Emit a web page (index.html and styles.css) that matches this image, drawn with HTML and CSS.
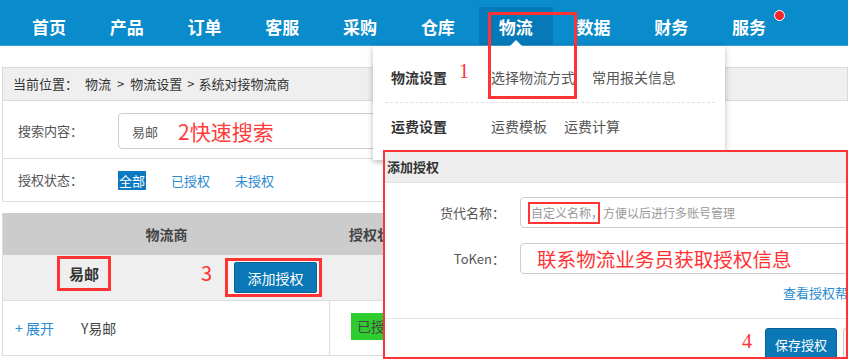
FILE: index.html
```html
<!DOCTYPE html>
<html lang="zh-CN">
<head>
<meta charset="utf-8">
<title>系统对接物流商</title>
<link rel="stylesheet" href="styles.css">
</head>
<body>
<header class="nav">
  <a class="nav-item">首页</a>
  <a class="nav-item">产品</a>
  <a class="nav-item">订单</a>
  <a class="nav-item">客服</a>
  <a class="nav-item">采购</a>
  <a class="nav-item">仓库</a>
  <a class="nav-item active">物流</a>
  <a class="nav-item">数据</a>
  <a class="nav-item">财务</a>
  <a class="nav-item">服务<span class="dot"></span></a>
</header>

<main class="page">
  <div class="crumb">当前位置：<span class="crumb-first">物流</span><span class="sep">&gt;</span>物流设置<span class="sep sep2">&gt;</span>系统对接物流商</div>
  <div class="filter">
    <div class="search-row">
      <span class="f-label">搜索内容：</span>
      <div class="search-input"><span class="val">易邮</span><span class="note-search">2快速搜索</span></div>
    </div>
    <div class="status-row">
      <span class="f-label">授权状态：</span>
      <span class="tab on">全部</span>
      <a class="tab">已授权</a>
      <a class="tab">未授权</a>
    </div>
  </div>

  <div class="table">
    <div class="th th-1">物流商</div>
    <div class="th th-2">授权状态</div>
    <div class="group-row">
      <span class="group-name">易邮</span>
      <span class="note-3">3</span>
      <span class="btn-box"><a class="btn-add">添加授权</a></span>
    </div>
    <div class="td td-1"><a class="expand">+ 展开</a><span class="carrier">Y易邮</span></div>
    <div class="td td-2"><span class="badge">已授权</span></div>
  </div>
</main>

<nav class="dropdown">
  <div class="dd-row dd-first">
    <span class="dd-label">物流设置</span>
    <a class="dd-link">选择物流方式</a>
    <a class="dd-link">常用报关信息</a>
  </div>
  <div class="dd-row">
    <span class="dd-label">运费设置</span>
    <a class="dd-link">运费模板</a>
    <a class="dd-link">运费计算</a>
  </div>
  <span class="note-1">1</span>
</nav>

<div class="nav-box"></div>

<section class="modal">
  <div class="modal-head">添加授权</div>
  <div class="modal-body">
    <div class="m-row">
      <span class="m-label">货代名称：</span>
      <div class="m-input placeholder">自定义名称，方便以后进行多账号管理<span class="ph-box"></span></div>
    </div>
    <div class="m-row">
      <span class="m-label">ToKen：</span>
      <div class="m-input"><span class="note-token">联系物流业务员获取授权信息</span></div>
    </div>
    <a class="m-help">查看授权帮助</a>
  </div>
  <div class="m-foot">
    <span class="note-4">4</span>
    <a class="btn-save">保存授权</a>
    <a class="btn-cancel"></a>
  </div>
</section>
</body>
</html>
```

FILE: styles.css
```css
* { box-sizing: border-box; margin: 0; padding: 0; }
html, body { width: 848px; height: 359px; overflow: hidden; }
body {
  position: relative;
  background: #fff;
  color: #555;
  font-family: "Noto Sans CJK SC", "Microsoft YaHei", sans-serif;
  font-size: 13px;
}
a { color: inherit; text-decoration: none; }

/* ---------- top nav ---------- */
.nav {
  height: 46px;
  background: #0a8bcb;
  border-bottom: 1px solid #3da2d8;
  display: flex;
  align-items: flex-end;
  gap: 4px;
  padding-left: 12px;
}
.nav-item {
  position: relative;
  width: 73.8px;
  height: 38px;
  display: flex;
  align-items: center;
  justify-content: center;
  color: #fff;
  font-size: 17px;
  font-weight: 700;
}
.nav-item.active { background: #0679b8; }
.dot {
  position: absolute;
  left: 62px;
  top: 3px;
  width: 11px;
  height: 11px;
  border-radius: 50%;
  background: #f2262b;
  border: 1.5px solid #fff;
}

/* ---------- page ---------- */
.page { padding: 21px 0 0 2px; }
.crumb {
  height: 34px;
  border: 1px solid #d9d9d9;
  background: #efefef;
  padding-left: 10px;
  line-height: 32px;
  font-size: 13px;
  color: #333;
  white-space: nowrap;
}
.crumb-first { margin-left: 7px; }
.sep { margin: 0 6px; }
.sep2 { margin: 0 4px 0 5px; }

.filter {
  border-left: 1px solid #ddd;
  border-bottom: 1px solid #ddd;
}
.search-row {
  height: 58px;
  border-bottom: 1px solid #ddd;
  display: flex;
  align-items: flex-start;
  padding: 12px 0 0 15px;
}
.f-label { width: 100px; flex: none; line-height: 36px; color: #555; }
.search-input {
  width: 320px;
  height: 36px;
  border: 1px solid #ccc;
  border-radius: 4px;
  display: flex;
  align-items: center;
  padding-left: 13px;
}
.val { color: #555; }
.note-search {
  margin-left: 20px;
  color: #ff3b3b;
  font-size: 21px;
  line-height: 1;
}
.status-row {
  height: 42px;
  display: flex;
  align-items: center;
  padding-left: 15px;
}
.status-row .f-label { line-height: 20px; }
.tab { color: #2a8bd0; margin-right: 25px; line-height: 19px; }
.tab.on { background: #0a78c2; color: #fff; padding: 0 1px; }

/* ---------- table ---------- */
.table {
  margin-top: 11px;
  display: grid;
  grid-template-columns: 327px 1fr;
  border-left: 1px solid #ddd;
}
.th {
  height: 42px;
  line-height: 42px;
  background: #ccc;
  font-size: 14px;
  font-weight: 700;
  color: #444;
}
.th-1 { text-align: center; }
.th-2 { padding-left: 19px; }
.group-row {
  grid-column: 1 / -1;
  height: 46px;
  background: #efefef;
  border-bottom: 1px solid #ddd;
  display: flex;
  align-items: flex-start;
  padding-left: 54px;
}
.group-name {
  margin-top: 1px;
  width: 54px;
  height: 35px;
  border: 3px solid #f33;
  display: flex;
  align-items: center;
  justify-content: center;
  font-size: 15px;
  font-weight: 700;
  color: #333;
}
.note-3 {
  margin: 7px 0 0 90px;
  color: #f33;
  font-size: 20px;
  line-height: 22px;
}
.btn-box {
  margin: 3px 0 0 13px;
  width: 97px;
  height: 39px;
  border: 3px solid #f33;
  background: #f7f7f7;
  padding: 1px 2px 1px 6px;
  display: flex;
}
.btn-add {
  flex: 1;
  background: #0a77b6;
  border: 1px solid #06639a;
  border-radius: 2px;
  color: #fff;
  font-size: 14px;
  display: flex;
  align-items: center;
  justify-content: center;
}
.td {
  height: 55px;
  border-bottom: 1px solid #ddd;
  display: flex;
  align-items: center;
}
.td-1 { border-right: 1px solid #ddd; padding-left: 12px; font-size: 14px; }
.expand { color: #2a8bd0; }
.carrier { margin-left: 27px; color: #444; }
.td-2 { padding-left: 21px; align-items: flex-start; padding-top: 12px; }
.badge {
  height: 27px;
  line-height: 27px;
  padding: 0 6px;
  background: #2fcc2f;
  color: #444;
  font-size: 14px;
}

/* ---------- dropdown ---------- */
.dropdown {
  position: absolute;
  left: 373px;
  top: 46px;
  width: 352px;
  height: 114px;
  background: #fff;
  box-shadow: 0 2px 6px rgba(0, 0, 0, 0.28);
  padding: 8px 10px 0 12px;
}
.dropdown::before {
  content: "";
  position: absolute;
  left: 137px;
  top: -6px;
  border-left: 6px solid transparent;
  border-right: 6px solid transparent;
  border-bottom: 6px solid #fff;
}
.dd-row {
  height: 46px;
  display: flex;
  align-items: center;
  padding-left: 6px;
  font-size: 14px;
}
.dd-first {
  height: 49px;
  padding-bottom: 2px;
  border-bottom: 1px dashed #e2e2e2;
}
.dd-label { width: 100px; font-weight: 700; color: #333; }
.dd-link { color: #555; margin-right: 17px; }
.note-1 {
  position: absolute;
  left: 86px;
  top: 14px;
  color: #f33;
  font-family: "Liberation Serif", serif;
  font-size: 20px;
  line-height: 22px;
}
.nav-box {
  position: absolute;
  left: 488px;
  top: 12px;
  width: 89px;
  height: 87px;
  border: 3px solid #f33;
}

/* ---------- modal ---------- */
.modal {
  position: absolute;
  left: 383px;
  top: 150px;
  width: 465px;
  height: 209px;
  border: 2px solid #f33;
  background: #fff;
  overflow: hidden;
}
.modal-head {
  height: 31px;
  line-height: 30px;
  background: #eee;
  border-bottom: 1px solid #e3e3e3;
  padding-left: 2px;
  font-size: 13px;
  font-weight: 700;
  color: #333;
}
.modal-body { height: 135px; padding-top: 14px; }
.m-row {
  display: flex;
  align-items: center;
  height: 31px;
  margin-bottom: 15px;
}
.m-label { width: 120px; flex: none; text-align: right; color: #555; font-size: 13px; }
.m-input {
  position: relative;
  flex: none;
  margin-left: 15px;
  width: 420px;
  height: 31px;
  border: 1px solid #ccc;
  border-radius: 4px;
  display: flex;
  align-items: center;
  padding-left: 10px;
  white-space: nowrap;
}
.placeholder { color: #999; font-size: 12px; }
.ph-box {
  position: absolute;
  left: 7px;
  top: 4px;
  width: 72px;
  height: 22px;
  border: 2px solid #f33;
}
.note-token {
  margin-left: 6px;
  color: #f33;
  font-size: 19.6px;
  line-height: 1;
}
.m-help {
  display: block;
  margin: -5px 0 0 398px;
  color: #2a8bd0;
  font-size: 13px;
  line-height: 17px;
  white-space: nowrap;
}
.m-foot {
  border-top: 1px solid #e5e5e5;
  display: flex;
  align-items: flex-start;
  padding: 9px 0 0 357px;
  width: 560px;
}
.note-4 {
  flex: none;
  margin-top: 2px;
  color: #f33;
  font-family: "Liberation Serif", serif;
  font-size: 20px;
  line-height: 22px;
}
.btn-save {
  flex: none;
  margin-left: 13px;
  width: 72px;
  height: 32px;
  background: #0a78b6;
  border: 1px solid #06639a;
  border-radius: 3px;
  color: #fff;
  font-size: 13px;
  white-space: nowrap;
  display: flex;
  align-items: center;
  justify-content: center;
}
.btn-cancel {
  flex: none;
  margin-left: 6px;
  width: 40px;
  height: 32px;
  border: 1px solid #ccc;
  border-radius: 3px;
  background: #f5f5f5;
}
```
